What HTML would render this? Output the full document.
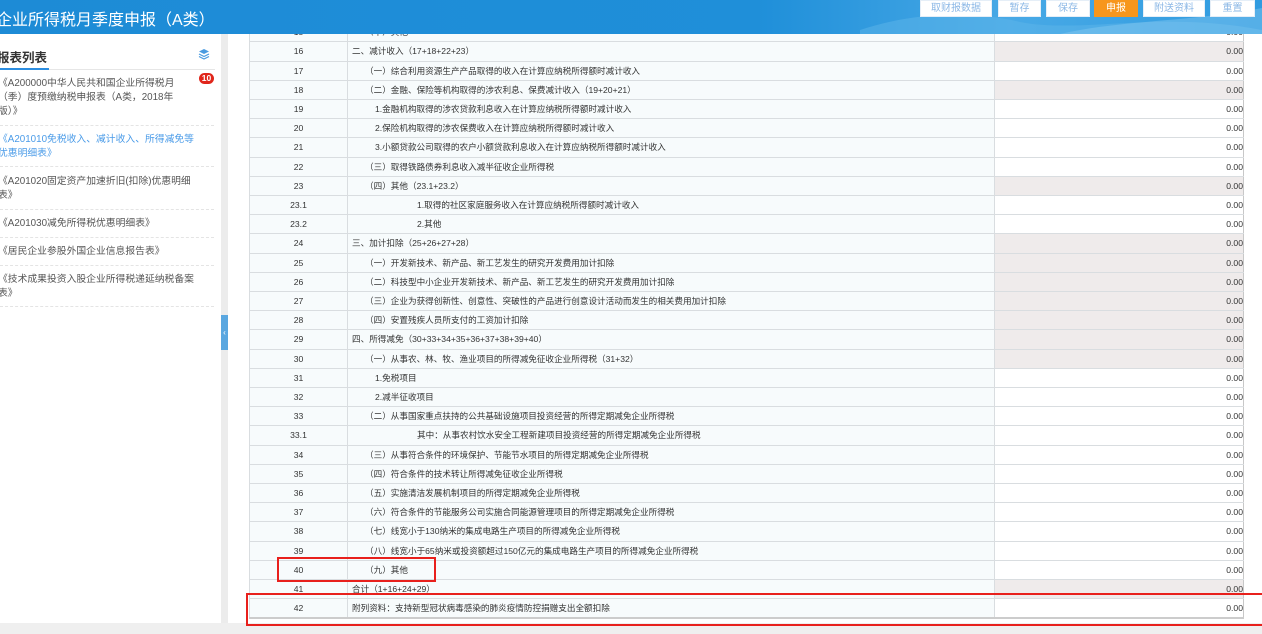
<!DOCTYPE html>
<html><head><meta charset="utf-8"><style>
*{margin:0;padding:0;box-sizing:border-box}
body{width:1262px;height:634px;overflow:hidden;background:#fff;font-family:"Liberation Sans","Noto Sans CJK SC",sans-serif;position:relative}
.hdr{position:absolute;left:0;top:0;width:1262px;height:34px;background:linear-gradient(90deg,#1d8bd6 0%,#1f8fd9 60%,#48a9e6 80%,#2f9be0 100%);overflow:hidden}
.hdr .t{position:absolute;left:-4px;top:6px;color:#fff;font-size:16px}
.btn{position:absolute;top:0;height:17px;background:#fff;color:#8cb8e6;font-size:10px;text-align:center;line-height:16px;border:1px solid #e5eef7}
.btn.o{background:#f7961c;color:#fff;border-color:#f7961c}
.left{position:absolute;left:0;top:34px;width:221px;height:589px;background:#fff}
.lt{position:absolute;left:-3px;top:13px;font-size:12.5px;font-weight:bold;color:#333}
.ul{position:absolute;left:0;top:34px;width:49px;height:2px;background:#2b8de0}
.ull{position:absolute;left:0;top:35px;width:215px;height:1px;background:#e6e6e6}
.it{position:absolute;left:-2px;white-space:nowrap;font-size:9.8px;line-height:14px;color:#555}
.sep{position:absolute;left:0;width:214px;border-top:1px dashed #e4e4e4}
.badge{position:absolute;left:199px;top:73px;width:15px;height:11px;border-radius:6px;background:#e0261b;color:#fff;font-size:8.5px;line-height:11px;text-align:center;font-weight:bold}
.gs{position:absolute;left:221px;top:34px;width:7px;height:589px;background:#ececec}
.tab{position:absolute;left:221px;top:315px;width:7px;height:35px;background:#5aa7e0;color:#fff;font-size:8px;line-height:35px;text-align:center}
.bot{position:absolute;left:0;top:623px;width:1262px;height:11px;background:#efefef}
.row{position:absolute;left:249px;width:995px;height:19.2px;font-size:8.6px;color:#333;border-bottom:1px solid #d9dde0}
.row div{position:absolute;top:0;height:100%;line-height:18px;white-space:nowrap}
.c1{left:0;width:99px;background:#f7fbfc;text-align:center;border-left:1px solid #d9dde0;border-right:1px solid #d9dde0}
.c2{left:99px;width:647px;background:#f7fbfc;border-right:1px solid #d9dde0}
.c3{left:746px;width:249px;background:#fff;text-align:right;border-right:1px solid #c8c8c8}
.g .c3{background:#efebeb}
.rb{position:absolute;border:2px solid #e8201c}
</style></head><body>
<div class="row" style="top:23px"><div class="c1">15</div><div class="c2" style="padding-left:17px">（十）其他</div><div class="c3">0.00</div></div>
<div class="row g" style="top:42.4px"><div class="c1">16</div><div class="c2" style="padding-left:4px">二、减计收入（17+18+22+23）</div><div class="c3">0.00</div></div>
<div class="row" style="top:61.6px"><div class="c1">17</div><div class="c2" style="padding-left:17px">（一）综合利用资源生产产品取得的收入在计算应纳税所得额时减计收入</div><div class="c3">0.00</div></div>
<div class="row g" style="top:80.8px"><div class="c1">18</div><div class="c2" style="padding-left:17px">（二）金融、保险等机构取得的涉农利息、保费减计收入（19+20+21）</div><div class="c3">0.00</div></div>
<div class="row" style="top:100px"><div class="c1">19</div><div class="c2" style="padding-left:27px">1.金融机构取得的涉农贷款利息收入在计算应纳税所得额时减计收入</div><div class="c3">0.00</div></div>
<div class="row" style="top:119.2px"><div class="c1">20</div><div class="c2" style="padding-left:27px">2.保险机构取得的涉农保费收入在计算应纳税所得额时减计收入</div><div class="c3">0.00</div></div>
<div class="row" style="top:138.4px"><div class="c1">21</div><div class="c2" style="padding-left:27px">3.小额贷款公司取得的农户小额贷款利息收入在计算应纳税所得额时减计收入</div><div class="c3">0.00</div></div>
<div class="row" style="top:157.6px"><div class="c1">22</div><div class="c2" style="padding-left:17px">（三）取得铁路债券利息收入减半征收企业所得税</div><div class="c3">0.00</div></div>
<div class="row g" style="top:176.8px"><div class="c1">23</div><div class="c2" style="padding-left:17px">（四）其他（23.1+23.2）</div><div class="c3">0.00</div></div>
<div class="row" style="top:196px"><div class="c1">23.1</div><div class="c2" style="padding-left:69px">1.取得的社区家庭服务收入在计算应纳税所得额时减计收入</div><div class="c3">0.00</div></div>
<div class="row" style="top:215.2px"><div class="c1">23.2</div><div class="c2" style="padding-left:69px">2.其他</div><div class="c3">0.00</div></div>
<div class="row g" style="top:234.4px"><div class="c1">24</div><div class="c2" style="padding-left:4px">三、加计扣除（25+26+27+28）</div><div class="c3">0.00</div></div>
<div class="row g" style="top:253.6px"><div class="c1">25</div><div class="c2" style="padding-left:17px">（一）开发新技术、新产品、新工艺发生的研究开发费用加计扣除</div><div class="c3">0.00</div></div>
<div class="row g" style="top:272.8px"><div class="c1">26</div><div class="c2" style="padding-left:17px">（二）科技型中小企业开发新技术、新产品、新工艺发生的研究开发费用加计扣除</div><div class="c3">0.00</div></div>
<div class="row g" style="top:292px"><div class="c1">27</div><div class="c2" style="padding-left:17px">（三）企业为获得创新性、创意性、突破性的产品进行创意设计活动而发生的相关费用加计扣除</div><div class="c3">0.00</div></div>
<div class="row g" style="top:311.2px"><div class="c1">28</div><div class="c2" style="padding-left:17px">（四）安置残疾人员所支付的工资加计扣除</div><div class="c3">0.00</div></div>
<div class="row g" style="top:330.4px"><div class="c1">29</div><div class="c2" style="padding-left:4px">四、所得减免（30+33+34+35+36+37+38+39+40）</div><div class="c3">0.00</div></div>
<div class="row g" style="top:349.6px"><div class="c1">30</div><div class="c2" style="padding-left:17px">（一）从事农、林、牧、渔业项目的所得减免征收企业所得税（31+32）</div><div class="c3">0.00</div></div>
<div class="row" style="top:368.8px"><div class="c1">31</div><div class="c2" style="padding-left:27px">1.免税项目</div><div class="c3">0.00</div></div>
<div class="row" style="top:388px"><div class="c1">32</div><div class="c2" style="padding-left:27px">2.减半征收项目</div><div class="c3">0.00</div></div>
<div class="row" style="top:407.2px"><div class="c1">33</div><div class="c2" style="padding-left:17px">（二）从事国家重点扶持的公共基础设施项目投资经营的所得定期减免企业所得税</div><div class="c3">0.00</div></div>
<div class="row" style="top:426.4px"><div class="c1">33.1</div><div class="c2" style="padding-left:69px">其中：从事农村饮水安全工程新建项目投资经营的所得定期减免企业所得税</div><div class="c3">0.00</div></div>
<div class="row" style="top:445.6px"><div class="c1">34</div><div class="c2" style="padding-left:17px">（三）从事符合条件的环境保护、节能节水项目的所得定期减免企业所得税</div><div class="c3">0.00</div></div>
<div class="row" style="top:464.8px"><div class="c1">35</div><div class="c2" style="padding-left:17px">（四）符合条件的技术转让所得减免征收企业所得税</div><div class="c3">0.00</div></div>
<div class="row" style="top:484px"><div class="c1">36</div><div class="c2" style="padding-left:17px">（五）实施清洁发展机制项目的所得定期减免企业所得税</div><div class="c3">0.00</div></div>
<div class="row" style="top:503.2px"><div class="c1">37</div><div class="c2" style="padding-left:17px">（六）符合条件的节能服务公司实施合同能源管理项目的所得定期减免企业所得税</div><div class="c3">0.00</div></div>
<div class="row" style="top:522.4px"><div class="c1">38</div><div class="c2" style="padding-left:17px">（七）线宽小于130纳米的集成电路生产项目的所得减免企业所得税</div><div class="c3">0.00</div></div>
<div class="row" style="top:541.6px"><div class="c1">39</div><div class="c2" style="padding-left:17px">（八）线宽小于65纳米或投资额超过150亿元的集成电路生产项目的所得减免企业所得税</div><div class="c3">0.00</div></div>
<div class="row" style="top:560.8px"><div class="c1">40</div><div class="c2" style="padding-left:17px">（九）其他</div><div class="c3">0.00</div></div>
<div class="row g" style="top:580px"><div class="c1">41</div><div class="c2" style="padding-left:4px">合计（1+16+24+29）</div><div class="c3">0.00</div></div>
<div class="row" style="top:599.2px;height:20px;border-bottom:2px solid #ccc"><div class="c1">42</div><div class="c2" style="padding-left:4px">附列资料：支持新型冠状病毒感染的肺炎疫情防控捐赠支出全额扣除</div><div class="c3">0.00</div></div>

<div class="hdr"><div class="t">企业所得税月季度申报（A类）</div>
<svg style="position:absolute;left:860px;top:0" width="402" height="34"><path d="M0 30 C60 10 120 12 160 22 C220 34 300 10 402 30 L402 34 L0 34Z" fill="#5db5ea" opacity="0.5"/><path d="M200 34 C260 20 330 22 402 8 L402 34Z" fill="#8fcdf2" opacity="0.4"/></svg>
<div class="btn" style="left:920px;width:72px">取财报数据</div>
<div class="btn" style="left:998px;width:43px">暂存</div>
<div class="btn" style="left:1046px;width:44px">保存</div>
<div class="btn o" style="left:1094px;width:44px">申报</div>
<div class="btn" style="left:1143px;width:62px">附送资料</div>
<div class="btn" style="left:1210px;width:45px">重置</div>
</div>
<div class="left">
<div class="lt">报表列表</div>
<svg style="position:absolute;left:198px;top:14px" width="12" height="12" viewBox="0 0 12 12"><path d="M6 1 L11 3.5 L6 6 L1 3.5Z" fill="#4a9be0"/><path d="M1 6 L6 8.5 L11 6 M1 8.5 L6 11 L11 8.5" fill="none" stroke="#4a9be0" stroke-width="1.2"/></svg>
<div class="ull"></div><div class="ul"></div>
<div class="it" style="top:43px">《A200000中华人民共和国企业所得税月<br>（季）度预缴纳税申报表（A类，2018年<br>版）》</div>
<div class="sep" style="top:91px"></div>
<div class="it" style="top:99px;color:#4a9be8">《A201010免税收入、减计收入、所得减免等<br>优惠明细表》</div>
<div class="sep" style="top:132px"></div>
<div class="it" style="top:141px">《A201020固定资产加速折旧(扣除)优惠明细<br>表》</div>
<div class="sep" style="top:175px"></div>
<div class="it" style="top:183px">《A201030减免所得税优惠明细表》</div>
<div class="sep" style="top:203px"></div>
<div class="it" style="top:211px">《居民企业参股外国企业信息报告表》</div>
<div class="sep" style="top:231px"></div>
<div class="it" style="top:239px">《技术成果投资入股企业所得税递延纳税备案<br>表》</div>
<div class="sep" style="top:272px"></div>
</div>
<div class="badge">10</div>
<div class="gs"></div><div class="tab">‹</div>
<div class="bot"></div>
<div class="rb" style="left:277px;top:557px;width:159px;height:25px"></div>
<div class="rb" style="left:246px;top:593px;width:1020px;height:33px"></div>
</body></html>
